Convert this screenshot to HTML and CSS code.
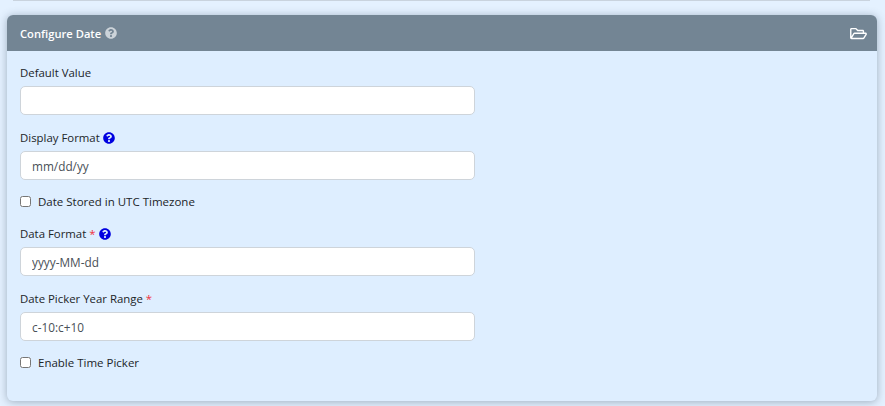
FILE: index.html
```html
<!DOCTYPE html>
<html lang="en">
  <head>
    <meta charset="UTF-8" />
    <title>Configure Date</title>
    <link rel="stylesheet" href="styles.css">
  </head>
  <body>
    <div class="prev-card"></div>
    <section class="card">
      <header class="card-head">
        <h2 class="card-title">
          Configure Date
          <svg class="help help-head" viewBox="0 0 512 512"><path d="M504 256c0 136.997-111.043 248-248 248S8 392.997 8 256C8 119.083 119.043 8 256 8s248 111.083 248 248zM262.655 90c-54.497 0-89.255 22.957-116.549 63.758-3.536 5.286-2.353 12.415 2.715 16.258l34.699 26.31c5.205 3.947 12.621 3.008 16.665-2.122 17.864-22.658 30.113-35.797 57.303-35.797 20.429 0 45.698 13.148 45.698 32.958 0 14.976-12.363 22.667-32.534 33.976C247.128 238.528 216 254.941 216 296v4c0 6.627 5.373 12 12 12h56c6.627 0 12-5.373 12-12v-1.333c0-28.462 83.186-29.647 83.186-106.667 0-58.002-60.165-102-116.531-102zM256 338c-25.365 0-46 20.635-46 46 0 25.364 20.635 46 46 46s46-20.636 46-46c0-25.365-20.635-46-46-46z"/></svg>
        </h2>
        <svg class="folder" viewBox="0 0 576 512"><path d="M527.9 224H480v-48c0-26.5-21.5-48-48-48H272l-64-64H48C21.5 64 0 85.5 0 112v288c0 26.5 21.5 48 48 48h400c16.5 0 31.9-8.5 40.7-22.6l79.9-128c20-31.9-3-73.4-40.7-73.4zM48 118c0-3.3 2.7-6 6-6h134.1l64 64H426c3.3 0 6 2.7 6 6v42H152c-16.8 0-32.4 8.8-41.1 23.2L48 351.4zm400 282H72l77.2-128H528z"/></svg>
      </header>
      <form class="card-body" action="#">
        <div class="field">
          <label class="field-label">Default Value</label>
          <input class="field-input" type="text" value="">
        </div>
        <div class="field">
          <label class="field-label">Display Format
            <svg class="help" viewBox="0 0 512 512"><path d="M504 256c0 136.997-111.043 248-248 248S8 392.997 8 256C8 119.083 119.043 8 256 8s248 111.083 248 248zM262.655 90c-54.497 0-89.255 22.957-116.549 63.758-3.536 5.286-2.353 12.415 2.715 16.258l34.699 26.31c5.205 3.947 12.621 3.008 16.665-2.122 17.864-22.658 30.113-35.797 57.303-35.797 20.429 0 45.698 13.148 45.698 32.958 0 14.976-12.363 22.667-32.534 33.976C247.128 238.528 216 254.941 216 296v4c0 6.627 5.373 12 12 12h56c6.627 0 12-5.373 12-12v-1.333c0-28.462 83.186-29.647 83.186-106.667 0-58.002-60.165-102-116.531-102zM256 338c-25.365 0-46 20.635-46 46 0 25.364 20.635 46 46 46s46-20.636 46-46c0-25.365-20.635-46-46-46z"/></svg>
          </label>
          <input class="field-input" type="text" value="mm/dd/yy">
        </div>
        <label class="check-row">
          <input class="check-box" type="checkbox">
          Date Stored in UTC Timezone
        </label>
        <div class="field">
          <label class="field-label">Data Format <span class="req">*</span>
            <svg class="help" viewBox="0 0 512 512"><path d="M504 256c0 136.997-111.043 248-248 248S8 392.997 8 256C8 119.083 119.043 8 256 8s248 111.083 248 248zM262.655 90c-54.497 0-89.255 22.957-116.549 63.758-3.536 5.286-2.353 12.415 2.715 16.258l34.699 26.31c5.205 3.947 12.621 3.008 16.665-2.122 17.864-22.658 30.113-35.797 57.303-35.797 20.429 0 45.698 13.148 45.698 32.958 0 14.976-12.363 22.667-32.534 33.976C247.128 238.528 216 254.941 216 296v4c0 6.627 5.373 12 12 12h56c6.627 0 12-5.373 12-12v-1.333c0-28.462 83.186-29.647 83.186-106.667 0-58.002-60.165-102-116.531-102zM256 338c-25.365 0-46 20.635-46 46 0 25.364 20.635 46 46 46s46-20.636 46-46c0-25.365-20.635-46-46-46z"/></svg>
          </label>
          <input class="field-input" type="text" value="yyyy-MM-dd">
        </div>
        <div class="field">
          <label class="field-label">Date Picker Year Range <span class="req">*</span></label>
          <input class="field-input" type="text" value="c-10:c+10">
        </div>
        <label class="check-row">
          <input class="check-box" type="checkbox">
          Enable Time Picker
        </label>
      </form>
    </section>
  </body>
</html>
```

FILE: styles.css
```css
html,
body {
  height: 100%;
}
body {
  margin: 0;
  padding: 0 8px 0 7px;
  box-sizing: border-box;
  overflow: hidden;
  background-color: #e4f1ff;
  font-family: "Open Sans", "Noto Sans", sans-serif;
  font-size: 11.4px;
  color: #212529;
}
.prev-card {
  height: 1px;
  margin: 0 7px 14px 6px;
  background-color: #c9d3de;
}
.card {
  height: 386px;
  border-radius: 6px;
  background-color: #deeeff;
  box-shadow: 0 1px 8px rgba(70, 90, 110, 0.45);
}
.card-head {
  display: flex;
  align-items: center;
  justify-content: space-between;
  height: 36px;
  padding: 0 10px 0 13px;
  border-radius: 6px 6px 0 0;
  background-color: #738594;
}
.card-title {
  display: flex;
  align-items: center;
  gap: 4px;
  margin: 0;
  font-size: 11.2px;
  font-weight: 600;
  color: #fff;
}
.help {
  width: 12px;
  height: 12px;
  fill: #0000e0;
}
.help-head {
  fill: #ccd3d9;
}
.folder {
  width: 17px;
  height: 15px;
  fill: #fff;
}
.card-body {
  display: flex;
  flex-direction: column;
  padding: 13px 13px 0;
}
.field {
  display: flex;
  flex-direction: column;
  margin-bottom: 14px;
}
.field-label {
  display: flex;
  align-items: center;
  gap: 3px;
  height: 17px;
  margin-bottom: 5px;
}
.req {
  color: #f0323c;
}
.field-input {
  box-sizing: border-box;
  width: 455px;
  height: 29px;
  padding: 0 11px;
  border: 1px solid #ced4da;
  border-radius: 5px;
  background-color: #fff;
  font-family: inherit;
  font-size: 11.8px;
  color: #495057;
}
.check-row {
  display: flex;
  align-items: center;
  gap: 7px;
  height: 18px;
  margin-top: -2px;
  margin-bottom: 15px;
  font-size: 11.5px;
}
.check-box {
  width: 11px;
  height: 11px;
  margin: 0;
}
```
